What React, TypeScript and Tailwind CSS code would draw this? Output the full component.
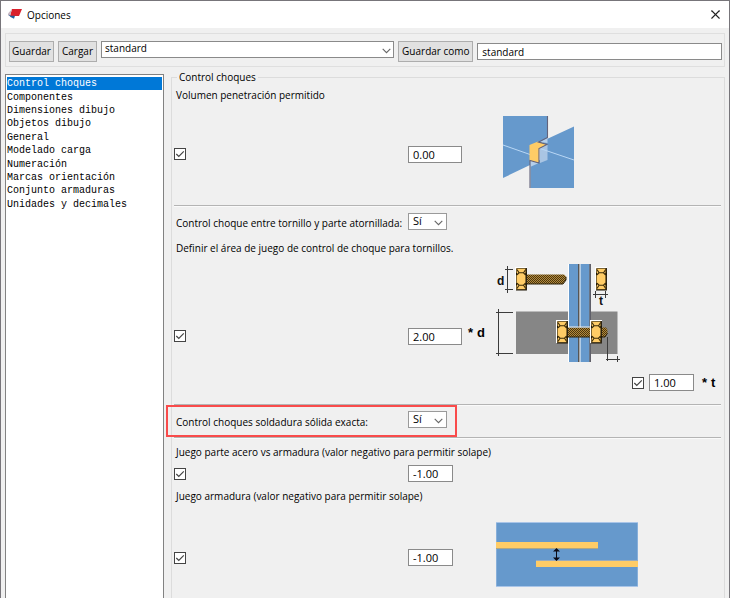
import React, { useState } from "react";
import { X } from "lucide-react";

const categories = [
  "Control choques",
  "Componentes",
  "Dimensiones dibujo",
  "Objetos dibujo",
  "General",
  "Modelado carga",
  "Numeración",
  "Marcas orientación",
  "Conjunto armaduras",
  "Unidades y decimales",
];

const rowGrid = "grid grid-cols-[234px_88px_1fr]";

function Chevron({ className }: { className: string }) {
  return (
    <svg
      viewBox="0 0 9 6"
      className={`pointer-events-none h-[6px] w-[9px] ${className}`}
      fill="none"
      stroke="#666"
      strokeWidth="1.1"
      aria-hidden="true"
    >
      <path d="M0.7 0.9 L4.5 4.7 L8.3 0.9" />
    </svg>
  );
}

function Check({ label }: { label: string }) {
  return (
    <span className="grid size-3 shrink-0">
      <input
        type="checkbox"
        defaultChecked
        aria-label={label}
        className="peer col-start-1 row-start-1 size-3 appearance-none border border-[#444] bg-white"
      />
      <svg
        viewBox="0 0 12 12"
        className="pointer-events-none invisible col-start-1 row-start-1 size-3 peer-checked:visible"
        fill="none"
        stroke="#444"
        strokeWidth="1.2"
        aria-hidden="true"
      >
        <path d="M2.3 6 L4.8 8.5 L9.8 3.4" />
      </svg>
    </span>
  );
}

function NumberBox({ label, value, wide }: { label: string; value: string; wide?: boolean }) {
  return (
    <input
      aria-label={label}
      type="text"
      defaultValue={value}
      className={`h-[17px] border border-[#8a8a8a] bg-white px-1 text-[11px] ${wide ? "w-[54px]" : "w-[45px]"}`}
    />
  );
}

function Factor({ symbol }: { symbol: string }) {
  return (
    <span className="flex gap-1 font-['Liberation_Sans',Arial,sans-serif] text-[13px] font-bold text-black">
      <span>*</span>
      <span>{symbol}</span>
    </span>
  );
}

function YesNo({ id }: { id: string }) {
  return (
    <span className="grid h-[17px] w-[39px] items-center">
      <select
        id={id}
        className="col-start-1 row-start-1 h-[17px] w-full appearance-none border border-[#9a9a9a] bg-white pb-[2px] pl-1 text-[11px] leading-[13px]"
      >
        <option>Sí</option>
        <option>No</option>
      </select>
      <Chevron className="col-start-1 row-start-1 mt-[2px] mr-1 justify-self-end" />
    </span>
  );
}

function Divider() {
  return <hr className="h-[2px] border-0 border-t border-[#b4b4b4] bg-[#fafafa]" />;
}

function PenetrationDrawing() {
  return (
    <svg viewBox="0 0 72 72" className="h-[72px] w-[72px]" aria-hidden="true">
      <path d="M0 0 H44.5 V24 L27 33 V49 L0 62 Z" fill="#6699cc" />
      <path d="M71 10.5 V72 H27.5 V48 L37 44 V29 L44 23 Z" fill="#6699cc" />
      <path d="M27 45 V51 L37 46.5 Z M37 26 L44.5 22 V27 Z" fill="#b5cfea" />
      <path d="M37 32 L44.5 28 V44 L37 47 Z" fill="#a9c5e3" />
      <path d="M0 29 L27 38.5 M37 32.5 L71 44" stroke="#b9d7f5" fill="none" />
      <path d="M26.5 29 L35 25.5 L44 28.5 L36 32.5 V47 L26.5 44.5 Z" fill="#ffcc66" />
      <path
        d="M44.5 0 V21.5 L35.5 26 L44 28.5 L36 32.5 V47 L27 44.5 V72"
        stroke="#62637c"
        strokeWidth="1.1"
        fill="none"
      />
    </svg>
  );
}

function Hex({ x, y }: { x: number; y: number }) {
  return (
    <g transform={`translate(${x} ${y})`}>
      <path d="M-1 -1 H11 V22 H-1 Z" fill="#fff" />
      <path d="M0.5 0.5 H10 V21.5 H0.5 Z" fill="#ffcc66" stroke="#5a4310" strokeWidth="0.8" />
      <path d="M10.3 0 V22 H0" stroke="#1d1505" strokeWidth="1.2" fill="none" />
      <path
        d="M1 1.5 L3 4.8 H7.5 L9.7 1.5 M3 4.8 L1 7 M7.5 4.8 L9.7 7 M1 20.5 L3 17.200 H7.5 L9.7 20.5 M3 17.200 L1 15 M7.5 17.200 L9.7 15"
        stroke="#3a2a08"
        strokeWidth="1.1"
        fill="none"
      />
      <path d="M0 4.5 L1.8 5.8 L0 7.500 Z M10.7 4.5 L8.9 5.8 L10.7 7.500 Z M0 14.8 L1.8 16.2 L0 17.8 Z M10.7 14.8 L8.9 16.2 L10.7 17.8 Z" fill="#1d1505" />
    </g>
  );
}

function BoltDrawing() {
  return (
    <svg viewBox="0 0 124 100" className="h-[100px] w-[124px]" aria-hidden="true">
      <defs>
        <pattern id="thread" width="2" height="2" patternUnits="userSpaceOnUse">
          <rect width="2" height="2" fill="#b58a3c" />
          <rect width="1" height="1" fill="#49360f" />
          <rect x="1" y="1" width="1" height="1" fill="#49360f" />
        </pattern>
      </defs>
      <rect x="20" y="49.5" width="101.5" height="42.5" fill="#868686" />
      <rect x="72" y="2" width="23" height="98" fill="#fff" />
      <rect x="73" y="2" width="9" height="98" fill="#6699cc" />
      <rect x="82" y="2" width="1.5" height="98" fill="#555" />
      <rect x="84.5" y="2" width="9" height="98" fill="#6699cc" />
      <rect x="93.5" y="2" width="1.2" height="98" fill="#1c1c28" />

      <path d="M30 12.500 H68 L70 14.5 V18 L67 22 H30 Z" fill="url(#thread)" />
      <path d="M30 22 H67 L70 18 V15" fill="none" stroke="#2b2008" />
      <Hex x={20} y={6} />
      <Hex x={100} y={6} />

      <path d="M70 65.5 H110 L111.500 68 V71 L109 75 H70 Z" fill="url(#thread)" />
      <path d="M73 65 H95" stroke="#eee" fill="none" />
      <path d="M71 75 H109 L111.500 71" fill="none" stroke="#2b2008" />
      <Hex x={61} y={59} />
      <Hex x={95} y={59} />

      <g stroke="#3c3c3c" strokeWidth="1" fill="none">
        <path d="M11.500 4 V31 M9 7.5 H17 M9 27.5 H17" />
        <path d="M2.5 47 V94 M0 50.5 H17 M0 91.5 H17" />
        <path d="M97 32.5 H112 M99.5 29 V36 M109.5 29 V36" />
        <path d="M111.500 75 V99 M110 97.5 H124 M121.5 94 V100" />
      </g>
      <g fontFamily="'Liberation Sans', Arial, sans-serif" fontWeight="700" fontSize="12" fill="#111">
        <text x="1" y="23">d</text>
        <text x="103" y="43">t</text>
      </g>
    </svg>
  );
}

function RebarDrawing() {
  return (
    <svg viewBox="0 0 142 65" className="h-[65px] w-[142px]" aria-hidden="true">
      <rect width="142" height="65" fill="#a9c5e8" />
      <rect x="0.5" y="1" width="141" height="63" fill="#6699cc" />
      <rect y="20" width="102" height="6" fill="#ffcc66" />
      <rect y="26" width="102" height="1" fill="#b3a780" />
      <rect x="40" y="38" width="102" height="1" fill="#9bacbd" />
      <rect x="40" y="39" width="102" height="6" fill="#ffcc66" />
      <path d="M60.5 29 V36" stroke="#0a0a14" />
      <path d="M60.5 26 L64 29.5 H57 Z M60.5 39 L64 35.5 H57 Z" fill="#0a0a14" />
    </svg>
  );
}

const button =
  "h-[21px] shrink-0 border border-[#adadad] bg-[#e1e1e1] text-center leading-[19px] whitespace-nowrap";

export default function App() {
  const [selected, setSelected] = useState(categories[0]);

  return (
    <div className="flex min-h-screen flex-col border-x border-t border-[#77757a] bg-[#f0f0f0] font-['Open_Sans','Noto_Sans',sans-serif] text-[10px] leading-4 text-black">
      <header className="flex h-[27px] items-center bg-white pr-[6px] pl-[7px]">
        <svg viewBox="0 0 14 10" className="mb-[2px] h-[10px] w-[14px]" aria-hidden="true">
          <path d="M4 0 H14 L11 7 H2 Z" fill="#d9202c" />
          <path d="M4 0 L0 4.500 V6.500 L2 7 Z" fill="#c9b9c4" />
          <path d="M0.5 5.500 L3 6.800 H7 L6 9.8 L2.500 8 Z" fill="#1f5f9c" />
        </svg>
        <h1 className="ml-[5px] flex-1">Opciones</h1>
        <button type="button" aria-label="Cerrar">
          <X size={15} strokeWidth={1.7} color="#222" />
        </button>
      </header>

      <div className="mx-1 mt-[5px] flex h-[34px] items-start gap-1 border border-[#dfdfdf] pt-[7px] pr-[2px] pl-[3px]">
        <button type="button" className={`${button} w-[45px]`}>Guardar</button>
        <button type="button" className={`${button} w-[39px]`}>Cargar</button>
        <span className="grid h-[17px] min-w-0 flex-[5] items-center">
          <select
            aria-label="Configuración"
            className="col-start-1 row-start-1 h-[17px] w-full appearance-none border border-[#8a8a8a] bg-white pb-[2px] pl-[3px] leading-[13px]"
          >
            <option>standard</option>
          </select>
          <Chevron className="col-start-1 row-start-1 mt-[2px] mr-[3px] justify-self-end" />
        </span>
        <button type="button" className={`${button} w-[75px]`}>Guardar como</button>
        <input
          type="text"
          aria-label="Guardar como"
          defaultValue="standard"
          className="mt-[2px] h-[17px] min-w-0 flex-[4] border border-[#8a8a8a] bg-white px-1"
        />
      </div>

      <div className="flex flex-1 px-1">
        <nav
          aria-label="Categorías"
          className="mt-[7px] w-[159px] shrink-0 border-x border-t border-[#828282] bg-white px-px pt-[2px] font-['Liberation_Mono','Courier_New',monospace] text-[10px]"
        >
          <ul className="flex h-[134px] flex-col">
            {categories.map((name) => (
              <li key={name} className="flex flex-1">
                <button
                  type="button"
                  onClick={() => setSelected(name)}
                  className={`flex w-full items-center text-left leading-[13px] ${
                    name === selected ? "bg-[#0078d7] text-white" : ""
                  }`}
                >
                  {name}
                </button>
              </li>
            ))}
          </ul>
        </nav>

        <fieldset className="mt-[3px] ml-[7px] min-w-0 flex-1 border-x border-t border-[#dcdcdc] pr-[3px] pl-[2px]">
          <legend className="ml-[3px] px-[2px] leading-[14px]">Control choques</legend>

          <section className="pt-[3px]">
            <p className="pl-[2px]">Volumen penetración permitido</p>
            <div className={`${rowGrid} h-[102px] items-center`}>
              <Check label="Volumen penetración permitido" />
              <NumberBox label="Volumen" value="0.00" wide />
              <div className="mb-1 ml-[7px]">
                <PenetrationDrawing />
              </div>
            </div>
          </section>
          <Divider />

          <section className="pt-[6px]">
            <div className={rowGrid}>
              <label htmlFor="tornillo" className="mt-[2px] pl-[2px] whitespace-nowrap">
                Control choque entre tornillo y parte atornillada:
              </label>
              <YesNo id="tornillo" />
            </div>
            <p className="mt-[9px] pl-[2px]">Definir el área de juego de control de choque para tornillos.</p>
            <div className={`${rowGrid} mt-[6px] items-center`}>
              <div className="pt-12">
                <Check label="Holgura en diámetros" />
              </div>
              <div className="flex items-center gap-[6px] pt-12">
                <NumberBox label="Diámetros" value="2.00" wide />
                <div className="pb-[6px]">
                  <Factor symbol="d" />
                </div>
              </div>
              <BoltDrawing />
            </div>
            <div className={`${rowGrid} mt-3`}>
              <div className="col-start-3 flex h-[17px] items-center pl-[136px]">
                <Check label="Holgura en espesores" />
                <span className="ml-[5px] flex items-center gap-2">
                  <NumberBox label="Espesores" value="1.00" />
                  <Factor symbol="t" />
                </span>
              </div>
            </div>
          </section>
          <div className="mt-[13px]">
            <Divider />
          </div>

          <section className="relative">
            <div className={`${rowGrid} pt-[5px] pb-[7px]`}>
              <label htmlFor="soldadura" className="mt-[3px] pl-[2px]">
                Control choques soldadura sólida exacta:
              </label>
              <YesNo id="soldadura" />
            </div>
            <div className="pointer-events-none absolute -top-px -left-2 h-8 w-[291px] border-2 border-[#f94b4b]" />
          </section>
          <Divider />

          <section className="pt-[5px]">
            <p className="pl-[2px]">Juego parte acero vs armadura (valor negativo para permitir solape)</p>
            <div className={`${rowGrid} mt-[5px] items-center`}>
              <Check label="Juego parte acero vs armadura" />
              <NumberBox label="Juego acero" value="-1.00" />
            </div>
            <p className="mt-[6px] pl-[2px]">Juego armadura (valor negativo para permitir solape)</p>
            <div className={`${rowGrid} mt-[18px] items-center`}>
              <div className="pt-[6px]">
                <Check label="Juego armadura" />
              </div>
              <div className="flex pt-[6px]">
                <NumberBox label="Valor armadura" value="-1.00" />
              </div>
              <RebarDrawing />
            </div>
          </section>
        </fieldset>
      </div>
    </div>
  );
}
